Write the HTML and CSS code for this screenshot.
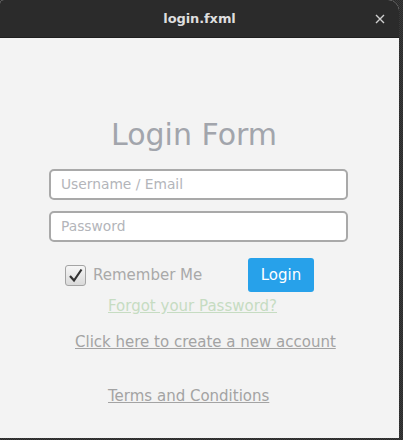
FILE: index.html
```html
<!DOCTYPE html>
<html>
<head>
<meta charset="utf-8">
<link rel="stylesheet" href="styles.css">
</head>
<body>
<div class="window">
  <div class="titlebar">
    <span class="title">login.fxml</span>
    <svg class="close" width="10" height="10" viewBox="0 0 10 10"><path d="M1 1 L9 9 M9 1 L1 9" stroke="#cfcfcf" stroke-width="1.4"/></svg>
  </div>
  <div class="content">
    <h1 class="heading">Login Form</h1>
    <div class="field">Username / Email</div>
    <div class="field second">Password</div>
    <div class="row">
      <label class="remember">
        <span class="box">
          <svg width="17" height="17" viewBox="0 0 17 17"><path d="M3 9 L7 13.5 L14.5 2.5" fill="none" stroke="#333" stroke-width="2.2"/></svg>
        </span>
        Remember Me
      </label>
      <button class="login">Login</button>
    </div>
    <a class="link forgot">Forgot your Password?</a>
    <a class="link create">Click here to create a new account</a>
    <a class="link terms">Terms and Conditions</a>
  </div>
</div>
</body>
</html>
```

FILE: styles.css
```css
html, body {
  margin: 0;
  padding: 0;
}
body {
  width: 403px;
  height: 440px;
  background-color: #2f2f2f;
  background-image: repeating-conic-gradient(#3a3a3a 0 25%, #2a2a2a 0 50%);
  background-size: 2px 2px;
  font-family: "DejaVu Sans", sans-serif;
  overflow: hidden;
}
.window {
  width: 399px;
  height: 438px;
  display: flex;
  flex-direction: column;
  border-radius: 4px 11px 0 0;
  overflow: hidden;
  background: #f2f2f2;
}
.titlebar {
  height: 38px;
  flex: none;
  background: #2b2b2b;
  border-bottom: 1px solid #1f1f1f;
  box-sizing: border-box;
  position: relative;
  display: flex;
  align-items: center;
  justify-content: center;
}
.title {
  color: #dedede;
  font-weight: bold;
  font-size: 13px;
  letter-spacing: -0.1px;
}
.close {
  position: absolute;
  right: 14px;
  top: 14px;
}
.content {
  flex: 1;
  background: #f3f3f3;
  display: flex;
  flex-direction: column;
  align-items: flex-start;
}
.heading {
  margin: 82px 0 0 111px;
  font-weight: normal;
  font-size: 30px;
  line-height: 30px;
  color: #a2a5ac;
}
.field {
  margin: 19px 0 0 49px;
  width: 299px;
  height: 31px;
  box-sizing: border-box;
  border: 2px solid #a9a9a9;
  border-radius: 5px;
  background: #fff;
  padding-left: 10px;
  font-size: 13.8px;
  line-height: 27px;
  color: #b3b5ba;
}
.field.second {
  margin-top: 11px;
}
.row {
  margin: 16px 0 0 65px;
  display: flex;
  align-items: center;
  height: 34px;
}
.remember {
  display: flex;
  align-items: center;
  font-size: 15px;
  color: #a9a9a9;
  width: 183px;
}
.box {
  width: 21px;
  height: 21px;
  box-sizing: border-box;
  border: 1px solid #a4a4a4;
  border-radius: 3px;
  background: linear-gradient(#f6f6f6, #dadada);
  margin-right: 7px;
  display: flex;
  align-items: center;
  justify-content: center;
}
.login {
  width: 66px;
  height: 34px;
  border: none;
  border-radius: 3px;
  background: #27a1ea;
  color: #fff;
  font-family: "DejaVu Sans", sans-serif;
  font-size: 15px;
  padding: 0;
}
.link {
  font-size: 15px;
  text-decoration: underline;
  line-height: 18px;
}
.forgot {
  margin: 5px 0 0 108px;
  color: #c6dcc2;
}
.create {
  margin: 18px 0 0 75px;
  color: #a3a3a3;
}
.terms {
  margin: 36px 0 0 108px;
  color: #a3a3a3;
}
```
